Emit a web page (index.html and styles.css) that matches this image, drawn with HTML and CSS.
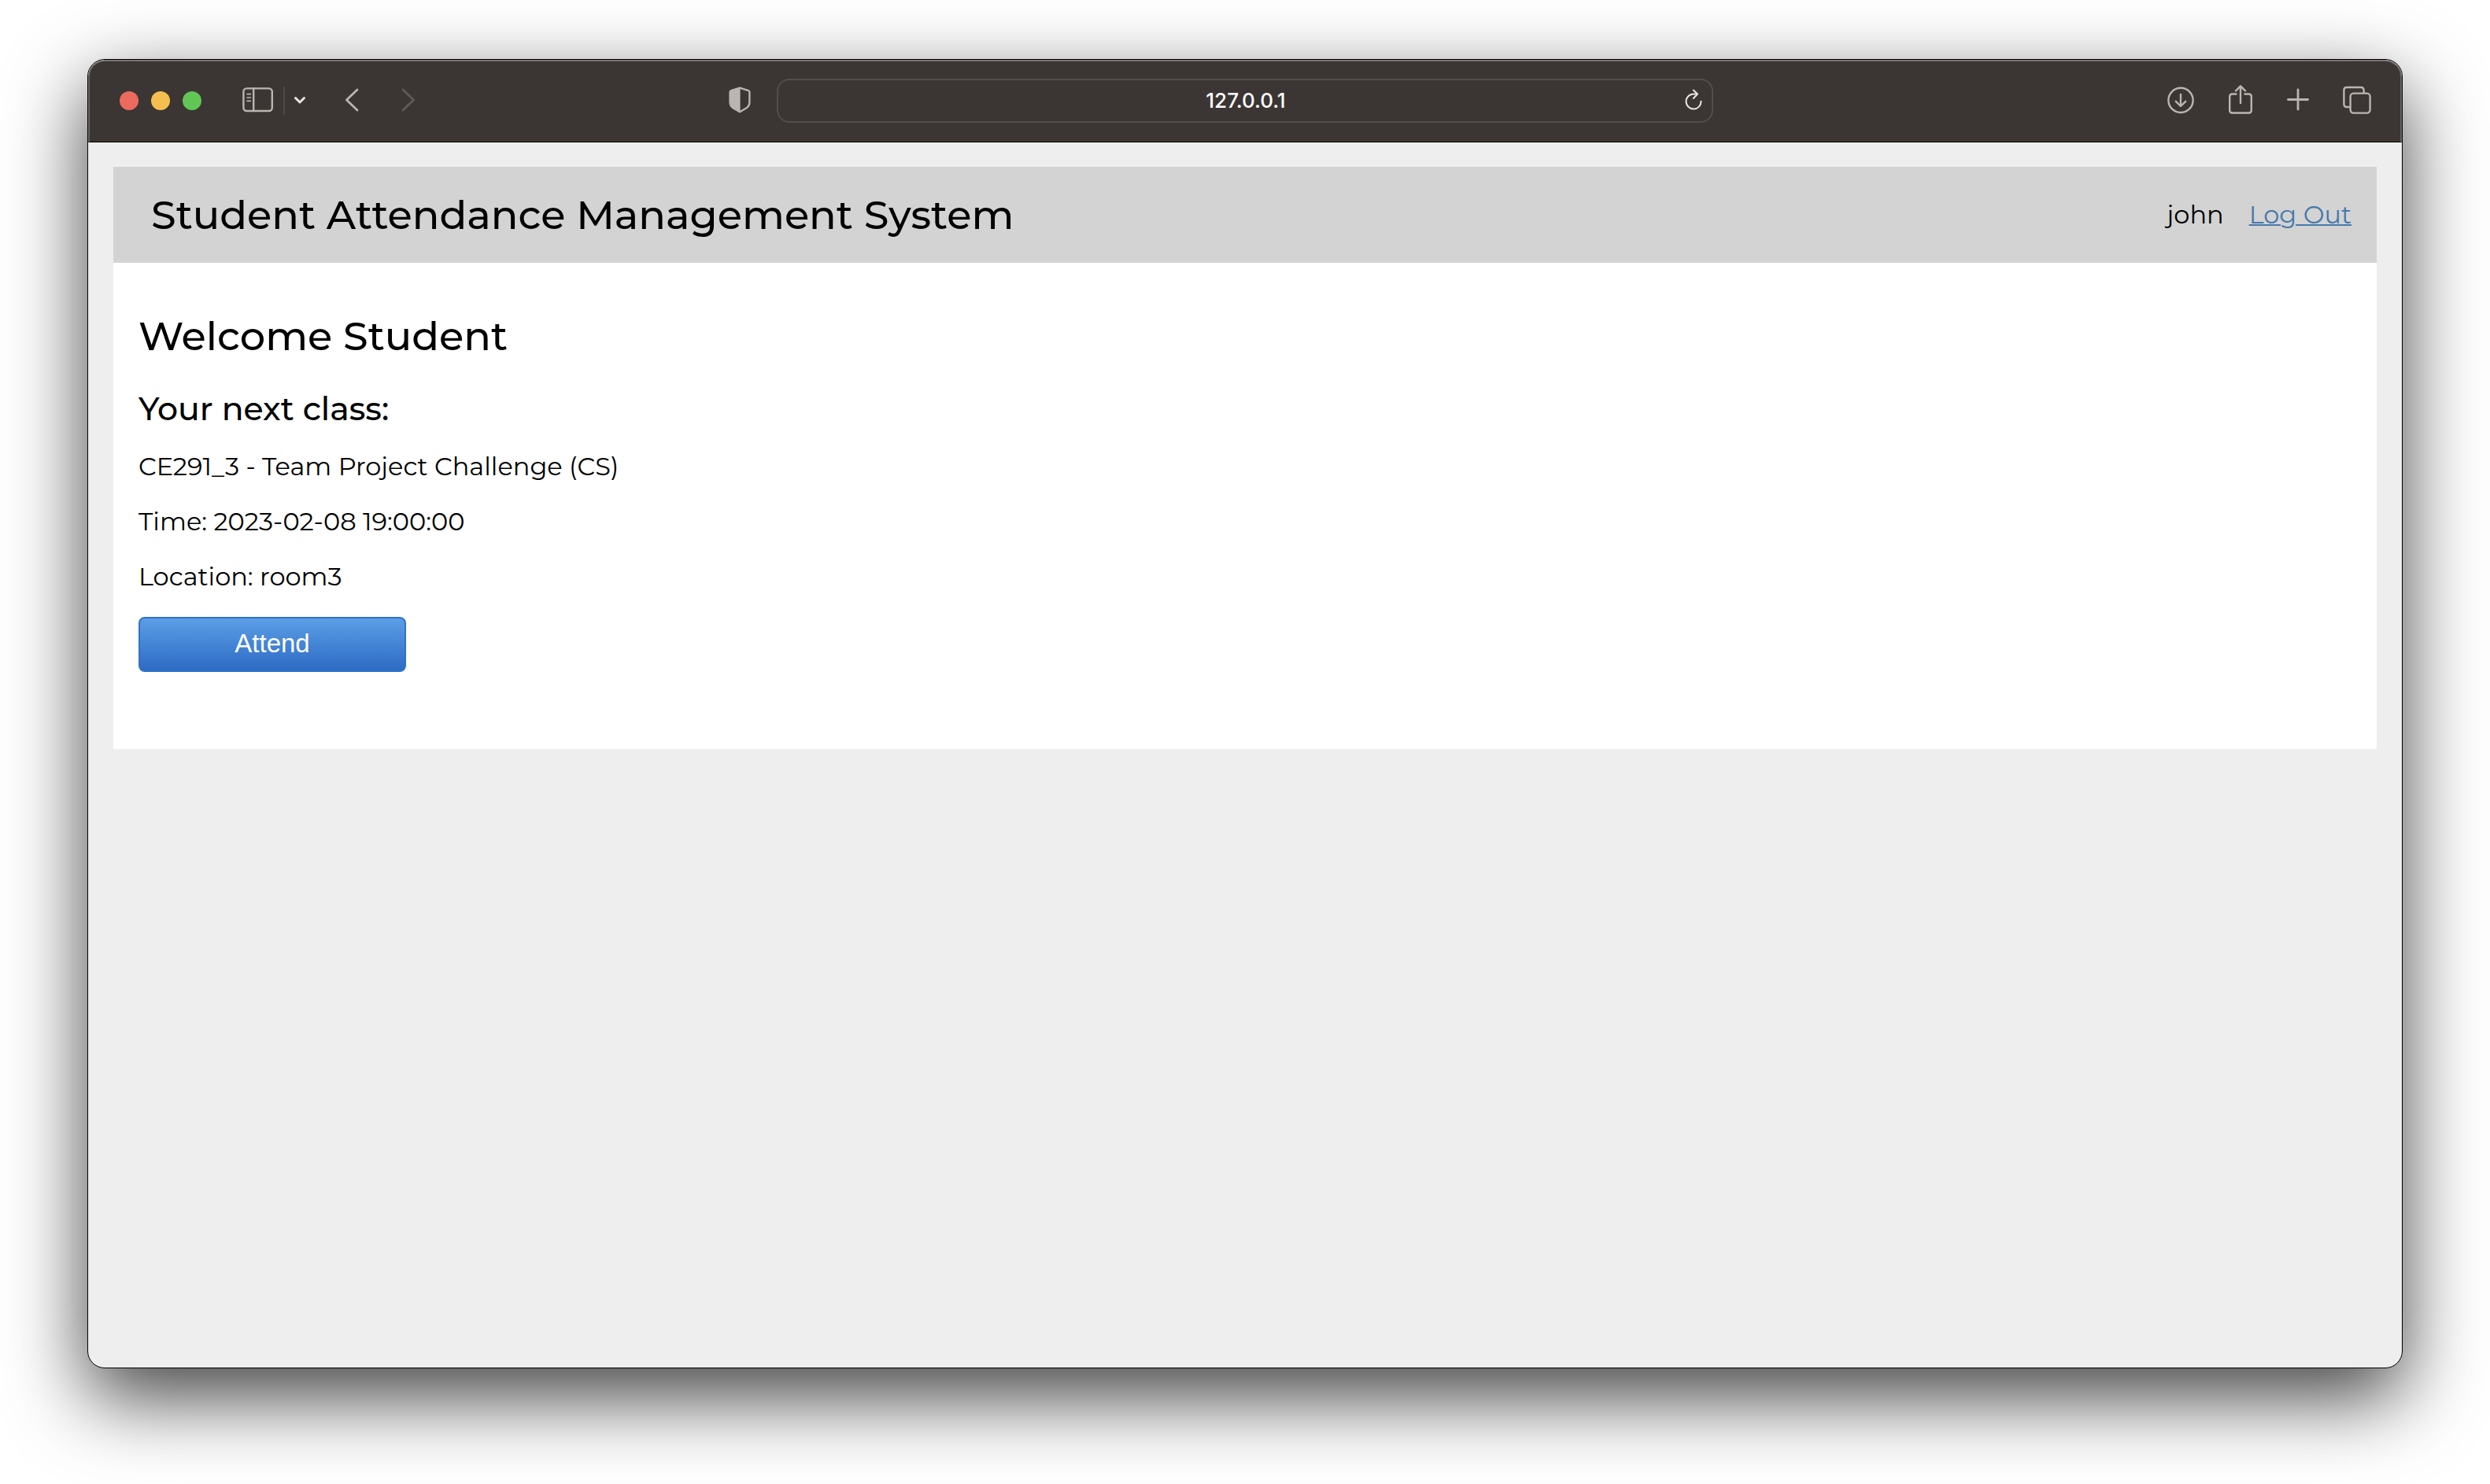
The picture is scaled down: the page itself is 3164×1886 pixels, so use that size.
FILE: index.html
```html
<!DOCTYPE html>
<html lang="en">
<head>
<meta charset="utf-8">
<meta name="viewport" content="width=device-width, initial-scale=1">
<title>Student Attendance Management System</title>
<link rel="stylesheet" href="styles.css">
</head>
<body>
<div class="window">
  <div class="toolbar">
    <div class="toolbar-left">
      <div class="lights">
        <button class="light light-close" aria-label="Close"></button>
        <button class="light light-min" aria-label="Minimize"></button>
        <button class="light light-max" aria-label="Zoom"></button>
      </div>
      <div class="sidebar-group">
        <button class="tool" aria-label="Sidebar">
          <svg width="40" height="32" viewBox="0 0 40 32" fill="none" stroke="currentColor" stroke-width="2.4" stroke-linecap="round"><rect x="1.4" y="1.4" width="36.4" height="28.6" rx="4"/><path d="M14.2 1.4V30"/><path stroke-width="1.6" d="M6 8.6h4.4M6 13h4.4M6 17.4h4.4"/></svg>
        </button>
        <span class="divider"></span>
        <button class="tool tool-bright" aria-label="Sidebar menu">
          <svg width="14" height="12" viewBox="0 0 14 12" fill="none" stroke="currentColor" stroke-width="3" stroke-linecap="round" stroke-linejoin="round"><path d="M1.500 3.500L7 9L12.500 3.500"/></svg>
        </button>
      </div>
      <div class="nav-group">
        <button class="tool" aria-label="Back">
          <svg width="18" height="30" viewBox="0 0 18 30" fill="none" stroke="currentColor" stroke-width="2.800" stroke-linecap="round" stroke-linejoin="round"><path d="M16 2L2.400 15L16 28"/></svg>
        </button>
        <button class="tool tool-dim" aria-label="Forward" disabled>
          <svg width="18" height="30" viewBox="0 0 18 30" fill="none" stroke="currentColor" stroke-width="2.800" stroke-linecap="round" stroke-linejoin="round"><path d="M2 2L15.600 15L2 28"/></svg>
        </button>
      </div>
      <button class="tool tool-shield" aria-label="Privacy report">
        <svg width="28" height="34" viewBox="0 0 28 34" fill="none" stroke="currentColor" stroke-width="2.400" stroke-linejoin="round"><path d="M14 1.600L25 5.200Q26.400 5.700 26.400 7V20Q26.400 24.500 22.500 27.200L14 32.200L5.500 27.200Q1.600 24.500 1.600 20V7Q1.600 5.700 3 5.200Z"/><path fill="currentColor" stroke="none" d="M14.600 1V33L5 27.500Q1 24.500 1 20V6L14 1Z"/></svg>
      </button>
    </div>
    <form class="address">
      <input class="address-input" type="text" value="127.0.0.1" aria-label="Address">
      <button class="tool tool-bright" type="button" aria-label="Reload">
        <svg width="22" height="28" viewBox="0 0 22 28" fill="none" stroke="currentColor" stroke-width="2" stroke-linecap="round" stroke-linejoin="round"><path d="M20.500 15.800A9.500 9.500 0 1 1 11 6.500H15.500"/><path d="M10.800 1.600L16 6.500L10.800 12"/></svg>
      </button>
    </form>
    <div class="toolbar-right">
      <button class="tool" aria-label="Downloads">
        <svg width="34" height="38" viewBox="0 0 34 38" fill="none" stroke="currentColor" stroke-width="2.400" stroke-linecap="round" stroke-linejoin="round"><circle cx="17" cy="19.400" r="15.600"/><path d="M17 12V26.500M10.800 20.800L17 27L23.200 20.800"/></svg>
      </button>
      <button class="tool" aria-label="Share">
        <svg width="32" height="38" viewBox="0 0 32 38" fill="none" stroke="currentColor" stroke-width="2.400" stroke-linecap="round" stroke-linejoin="round"><path d="M10.500 11.500H5.500Q2.200 11.500 2.200 14.800V32Q2.200 35.500 5.500 35.500H26.500Q29.800 35.500 29.800 32V14.800Q29.800 11.500 26.500 11.500H21.500"/><path d="M16 23V1.500M10 7.300L16 1.300L22 7.300"/></svg>
      </button>
      <button class="tool" aria-label="New tab">
        <svg width="28" height="38" viewBox="0 0 28 38" fill="none" stroke="currentColor" stroke-width="2.800" stroke-linecap="round"><path d="M14 6V31M1.500 18.500H26.500"/></svg>
      </button>
      <button class="tool" aria-label="Tab overview">
        <svg width="36" height="38" viewBox="0 0 36 38" fill="none" stroke="currentColor" stroke-width="2.400"><rect x="9.600" y="10.600" width="25" height="25" rx="4"/><path d="M9.500 28H5Q1.400 28 1.400 24.500V6.500Q1.400 3 5 3H23Q26.600 3 26.600 6.500V10.500"/></svg>
      </button>
    </div>
  </div>
  <div class="viewport">
    <header class="site-header">
      <h1 class="site-title">Student Attendance Management System</h1>
      <div class="account">
        <span>john</span>
        <a class="logout" href="#logout">Log Out</a>
      </div>
    </header>
    <main class="content">
      <h2 class="welcome">Welcome Student</h2>
      <h3 class="subheading">Your next class:</h3>
      <p class="detail">CE291_3 - Team Project Challenge (CS)</p>
      <p class="detail">Time: 2023-02-08 19:00:00</p>
      <p class="detail">Location: room3</p>
      <button class="attend">Attend</button>
    </main>
  </div>
</div>
</body>
</html>
```

FILE: styles.css
```css
* {
  box-sizing: border-box;
}

body {
  display: flex;
  min-height: 100vh;
  margin: 0;
  padding: 75px 111px 147px;
  background: #fff;
  color: #000;
  font-family: Montserrat, Inter, sans-serif;
  font-size: 32px;
  line-height: 38px;
}

button {
  margin: 0;
  padding: 0;
  border: 0;
  background: none;
  font: inherit;
}

.window {
  display: flex;
  flex: 1;
  flex-direction: column;
  min-width: 0;
  overflow: hidden;
  border: 1px solid #000;
  border-radius: 22px;
  background: #eee;
  box-shadow: 0 36px 100px rgba(0, 0, 0, 0.75);
}

/* Browser toolbar */
.toolbar {
  display: grid;
  grid-template-columns: 1fr minmax(300px, 1190px) 1fr;
  align-items: center;
  height: 105px;
  padding-bottom: 2px;
  border: 2px solid #696562;
  border-top-color: #787471;
  border-bottom: 1px solid #000;
  border-radius: 21px 21px 0 0;
  background: #3b3633;
}

.toolbar-left,
.toolbar-right,
.lights,
.sidebar-group,
.nav-group {
  display: flex;
  align-items: center;
}

.toolbar-left {
  padding: 0 33px 0 38px;
}

.toolbar-right {
  justify-content: flex-end;
  gap: 43px;
  padding-right: 37px;
}

.lights {
  gap: 16px;
}

.light {
  width: 24px;
  height: 24px;
  border-radius: 50%;
}

.light-close {
  background: #ed6a5f;
}

.light-min {
  background: #f5bf4f;
}

.light-max {
  background: #62c655;
}

.sidebar-group {
  gap: 12px;
  margin-left: 52px;
}

.nav-group {
  gap: 54px;
  margin-left: 50px;
}

.divider {
  width: 2px;
  height: 36px;
  background: #4d4946;
}

.tool {
  display: flex;
  padding-bottom: 2px;
  color: #bab5b1;
}

.tool-bright {
  color: #e6e3e1;
}

.tool-dim {
  color: #605b58;
}

.tool-shield {
  margin-left: auto;
}

.address {
  display: flex;
  align-items: center;
  height: 56px;
  padding: 0 12px 0 36px;
  border: 2px solid #524e4b;
  border-radius: 16px;
}

.address-input {
  flex: 1;
  min-width: 0;
  padding: 0;
  border: 0;
  outline: 0;
  background: none;
  color: #fff;
  font: 500 26px/32px Inter, sans-serif;
  text-align: center;
}

/* Page */
.viewport {
  padding: 31px 32px 32px;
}

.site-header {
  display: flex;
  align-items: center;
  justify-content: space-between;
  padding: 32px 32px 32px 48px;
  background: #d3d3d3;
}

.site-title,
.welcome {
  margin: 0;
  font-size: 51px;
  font-weight: 500;
  line-height: 58px;
}

.account {
  display: flex;
  gap: 32px;
}

.logout {
  color: #4779ab;
  text-decoration-thickness: 2px;
}

.content {
  padding: 64px 32px 98px;
  background: #fff;
}

.subheading {
  margin: 40px 0 32px;
  font-size: 41px;
  font-weight: 500;
  line-height: 46px;
}

.detail {
  margin: 0 0 32px;
}

.attend {
  width: 340px;
  height: 70px;
  padding-bottom: 2px;
  border: 2px solid #3072c8;
  border-radius: 8px;
  background: linear-gradient(#5c9ee6, #2d6bc4);
  color: #fff;
  font-family: "Liberation Sans", Arial, sans-serif;
  font-size: 33px;
}
```
